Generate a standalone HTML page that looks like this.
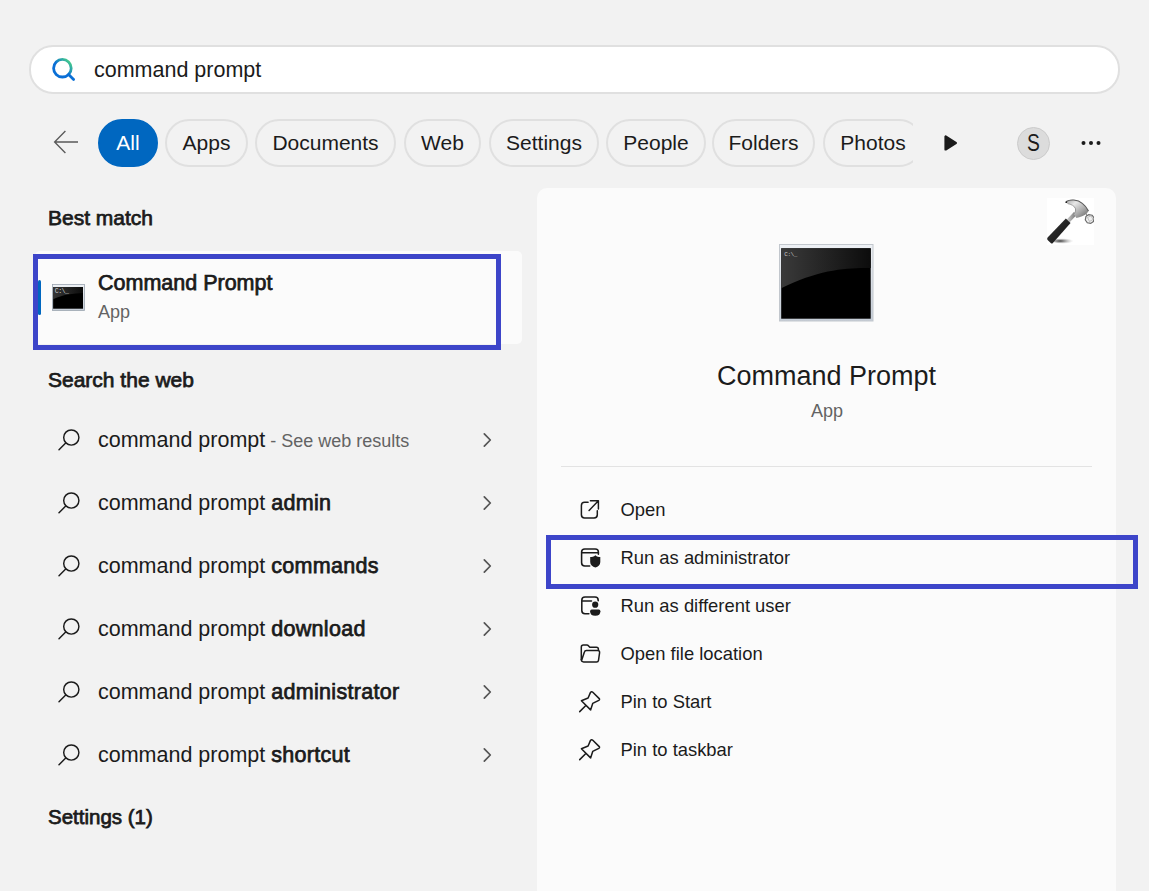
<!DOCTYPE html>
<html><head><meta charset="utf-8">
<style>
*{box-sizing:border-box;margin:0;padding:0}
html,body{width:1149px;height:891px;overflow:hidden;background:#f2f2f2;font-family:"Liberation Sans",sans-serif;color:#1b1b1b}
.a{position:absolute;white-space:nowrap;line-height:1}
.search{position:absolute;left:29px;top:45px;width:1091px;height:49px;border:2px solid #e0e0e0;border-radius:24px;background:#fff}
.chip{position:absolute;top:119px;height:48px;border:2px solid #e0e0e0;border-radius:24px;font-size:21px;line-height:44px;text-align:center;color:#1b1b1b}
.chip.on{background:#0067c0;border-color:#0067c0;color:#fff}
.b{-webkit-text-stroke:0.75px #1b1b1b}
.it .b{letter-spacing:0.3px}
.card{position:absolute;left:35px;top:251px;width:487px;height:93px;background:#fbfbfb;border-radius:5px}
.hl{position:absolute;border:5px solid #3d45c9}
.panel{position:absolute;left:537px;top:188px;width:578.5px;height:760px;background:#fbfbfb;border-radius:10px}
.it{font-size:21.5px}
.gr{color:#636363}
.act{font-size:18.4px}
</style></head>
<body>
<div class="search"></div>
<svg class="a" style="left:46px;top:52px" width="34" height="34" viewBox="0 0 34 34">
<defs><linearGradient id="sg" x1="0" y1="1" x2="1" y2="0"><stop offset="0.45" stop-color="#0a6fd6"/><stop offset="1" stop-color="#52e07a"/></linearGradient></defs>
<circle cx="16.4" cy="16.2" r="8.8" fill="none" stroke="url(#sg)" stroke-width="2.8"/>
<line x1="22.6" y1="22.6" x2="27.6" y2="27.6" stroke="#0a6fd6" stroke-width="2.8" stroke-linecap="round"/>
</svg>
<div class="a" style="left:94px;top:59.8px;font-size:21.5px">command prompt</div>

<!-- chips row -->
<svg class="a" style="left:50px;top:127px" width="32" height="30" viewBox="0 0 32 30">
<path d="M15.4 4 L4.6 15 L15.4 26 M4.6 15 H28" fill="none" stroke="#5a5a5a" stroke-width="1.35"/>
</svg>
<div class="chip on" style="left:98px;width:60px">All</div>
<div style="position:absolute;left:0;top:100px;width:913px;height:80px;overflow:hidden">
<div class="chip" style="left:165px;top:19px;width:83px">Apps</div>
<div class="chip" style="left:255px;top:19px;width:141px">Documents</div>
<div class="chip" style="left:404px;top:19px;width:77px">Web</div>
<div class="chip" style="left:489px;top:19px;width:110px">Settings</div>
<div class="chip" style="left:606px;top:19px;width:100px">People</div>
<div class="chip" style="left:712px;top:19px;width:103px">Folders</div>
<div class="chip" style="left:823px;top:19px;width:100px">Photos</div>
</div>
<svg class="a" style="left:942px;top:133px" width="18" height="20" viewBox="0 0 18 20">
<path d="M3.6 3.6 V16.4 L13.8 10 Z" fill="#1b1b1b" stroke="#1b1b1b" stroke-width="2.4" stroke-linejoin="round"/>
</svg>
<div class="a" style="left:1017px;top:127px;width:33px;height:33px;border-radius:50%;background:#dcdcdc;border:1px solid #cbcbcb"></div>
<div class="a" style="left:1017px;top:132.3px;width:33px;font-size:23.5px;text-align:center;transform:scaleX(0.82)">S</div>
<svg class="a" style="left:1078px;top:138px" width="26" height="10" viewBox="0 0 26 10">
<circle cx="5.5" cy="5" r="2" fill="#1b1b1b"/><circle cx="13" cy="5" r="2" fill="#1b1b1b"/><circle cx="20.5" cy="5" r="2" fill="#1b1b1b"/>
</svg>

<!-- left column -->
<div class="a b" style="left:48px;top:206.9px;font-size:21px">Best match</div>
<div class="card"></div>
<div class="a" style="left:38px;top:280px;width:3px;height:35px;background:#0067c0;border-radius:2px"></div>
<svg class="a" style="left:52px;top:284px" width="33" height="27" viewBox="0 0 33 27">
<rect x="0.4" y="0.4" width="32" height="26" fill="url(#bf)" stroke="#9aa4b0" stroke-width="0.8"/>
<rect x="1.1" y="3" width="29.9" height="21.7" fill="#000"/>
<path d="M1.1 3 H31 V8.9 C22 9.2 10 10.5 1.1 15.3 Z" fill="url(#bg1)" opacity="0.95"/>
<text x="2.7" y="9.4" font-family="Liberation Mono" font-size="6.6" fill="#d0d0d0" letter-spacing="-0.5">C:\_</text>
</svg>
<div class="a b" style="left:98px;top:272.6px;font-size:21.5px">Command Prompt</div>
<div class="a gr" style="left:98px;top:303px;font-size:18px">App</div>
<div class="hl" style="left:33px;top:254px;width:468px;height:96px"></div>

<div class="a b" style="left:48px;top:369px;font-size:21px">Search the web</div>

<div class="a it" style="left:98px;top:430.0px">command prompt<span class="gr" style="font-size:18px"> - See web results</span></div>
<div class="a it" style="left:98px;top:493.0px">command prompt <span class="b">admin</span></div>
<div class="a it" style="left:98px;top:556.0px">command prompt <span class="b">commands</span></div>
<div class="a it" style="left:98px;top:619.0px">command prompt <span class="b">download</span></div>
<div class="a it" style="left:98px;top:682.0px">command prompt <span class="b">administrator</span></div>
<div class="a it" style="left:98px;top:745.0px">command prompt <span class="b">shortcut</span></div>

<svg class="a" style="left:52px;top:422.0px" width="36" height="32" viewBox="0 0 36 32"><circle cx="19.3" cy="15.5" r="7.6" fill="none" stroke="#1b1b1b" stroke-width="1.45"/><line x1="13.7" y1="21.1" x2="7" y2="27.8" stroke="#1b1b1b" stroke-width="1.45" stroke-linecap="round"/></svg>
<svg class="a" style="left:478px;top:428.0px" width="18" height="24" viewBox="0 0 18 24"><path d="M6.3 5.8 L12.3 12 L6.3 18.2" fill="none" stroke="#555" stroke-width="1.7" stroke-linecap="round" stroke-linejoin="round"/></svg>
<svg class="a" style="left:52px;top:485.0px" width="36" height="32" viewBox="0 0 36 32"><circle cx="19.3" cy="15.5" r="7.6" fill="none" stroke="#1b1b1b" stroke-width="1.45"/><line x1="13.7" y1="21.1" x2="7" y2="27.8" stroke="#1b1b1b" stroke-width="1.45" stroke-linecap="round"/></svg>
<svg class="a" style="left:478px;top:491.0px" width="18" height="24" viewBox="0 0 18 24"><path d="M6.3 5.8 L12.3 12 L6.3 18.2" fill="none" stroke="#555" stroke-width="1.7" stroke-linecap="round" stroke-linejoin="round"/></svg>
<svg class="a" style="left:52px;top:548.0px" width="36" height="32" viewBox="0 0 36 32"><circle cx="19.3" cy="15.5" r="7.6" fill="none" stroke="#1b1b1b" stroke-width="1.45"/><line x1="13.7" y1="21.1" x2="7" y2="27.8" stroke="#1b1b1b" stroke-width="1.45" stroke-linecap="round"/></svg>
<svg class="a" style="left:478px;top:554.0px" width="18" height="24" viewBox="0 0 18 24"><path d="M6.3 5.8 L12.3 12 L6.3 18.2" fill="none" stroke="#555" stroke-width="1.7" stroke-linecap="round" stroke-linejoin="round"/></svg>
<svg class="a" style="left:52px;top:611.0px" width="36" height="32" viewBox="0 0 36 32"><circle cx="19.3" cy="15.5" r="7.6" fill="none" stroke="#1b1b1b" stroke-width="1.45"/><line x1="13.7" y1="21.1" x2="7" y2="27.8" stroke="#1b1b1b" stroke-width="1.45" stroke-linecap="round"/></svg>
<svg class="a" style="left:478px;top:617.0px" width="18" height="24" viewBox="0 0 18 24"><path d="M6.3 5.8 L12.3 12 L6.3 18.2" fill="none" stroke="#555" stroke-width="1.7" stroke-linecap="round" stroke-linejoin="round"/></svg>
<svg class="a" style="left:52px;top:674.0px" width="36" height="32" viewBox="0 0 36 32"><circle cx="19.3" cy="15.5" r="7.6" fill="none" stroke="#1b1b1b" stroke-width="1.45"/><line x1="13.7" y1="21.1" x2="7" y2="27.8" stroke="#1b1b1b" stroke-width="1.45" stroke-linecap="round"/></svg>
<svg class="a" style="left:478px;top:680.0px" width="18" height="24" viewBox="0 0 18 24"><path d="M6.3 5.8 L12.3 12 L6.3 18.2" fill="none" stroke="#555" stroke-width="1.7" stroke-linecap="round" stroke-linejoin="round"/></svg>
<svg class="a" style="left:52px;top:737.0px" width="36" height="32" viewBox="0 0 36 32"><circle cx="19.3" cy="15.5" r="7.6" fill="none" stroke="#1b1b1b" stroke-width="1.45"/><line x1="13.7" y1="21.1" x2="7" y2="27.8" stroke="#1b1b1b" stroke-width="1.45" stroke-linecap="round"/></svg>
<svg class="a" style="left:478px;top:743.0px" width="18" height="24" viewBox="0 0 18 24"><path d="M6.3 5.8 L12.3 12 L6.3 18.2" fill="none" stroke="#555" stroke-width="1.7" stroke-linecap="round" stroke-linejoin="round"/></svg>
<div class="a b" style="left:48px;top:806.7px;font-size:20.5px">Settings (1)</div>

<!-- right panel -->
<div class="panel"></div>
<svg class="a" style="left:1047px;top:198px" width="47" height="47" viewBox="0 0 47 47">
<defs>
<linearGradient id="hh" x1="0" y1="0" x2="1" y2="1"><stop offset="0" stop-color="#a0a0a0"/><stop offset="0.3" stop-color="#e8e8e8"/><stop offset="0.65" stop-color="#a8a8a8"/><stop offset="1" stop-color="#606060"/></linearGradient>
<linearGradient id="hn" x1="0" y1="0" x2="1" y2="0"><stop offset="0" stop-color="#d0d0d0"/><stop offset="1" stop-color="#707070"/></linearGradient>
<linearGradient id="hd" x1="0" y1="0" x2="1" y2="1"><stop offset="0" stop-color="#3a3a3a"/><stop offset="1" stop-color="#101010"/></linearGradient>
<radialGradient id="hs" cx="0.35" cy="0.5" r="0.6"><stop offset="0" stop-color="#222" stop-opacity="0.9"/><stop offset="1" stop-color="#aaa" stop-opacity="0"/></radialGradient>
</defs>
<rect width="47" height="47" fill="#fff"/>
<ellipse cx="16.5" cy="43" rx="11" ry="2.6" fill="url(#hs)"/>
<path d="M19.8 21.6 L26.9 14 L29.8 16.7 L22.7 24.2 Z" fill="url(#hn)"/>
<path d="M18.85 20.62 L23.55 24.98 L5.88 45.06 Q5 46 4 45.2 L0.6 42 Q-0.2 40.5 0.6 39.6 Z" fill="url(#hd)"/>
<path d="M19 3.4 C22.5 1.2 29 0.6 35.3 5.4 C38 7.4 40 10 41.5 12.9 L39.8 15.5 C37.5 17.5 33 19.5 29.4 20 L26.8 16.1 C28.8 13.2 29 9.6 25.5 7 C23.8 5.9 21.5 5.7 20.3 5.4 C18.9 5 18.4 3.8 19 3.4 Z" fill="url(#hh)"/>
<path d="M19.3 3.5 C23 1.2 30.5 1.2 35.3 5.4 C38 7.4 40 10 41.5 12.9" fill="none" stroke="#5a5a5a" stroke-width="1.1"/>
<path d="M20.6 5.6 C24 6.2 27.5 7.8 28.4 10.5 C29 12.5 28.3 14.6 26.9 16.1" fill="none" stroke="#8a8a8a" stroke-width="0.8"/>
<circle cx="19.3" cy="4.2" r="0.9" fill="#222"/>
<path d="M38.6 14.8 L41 17.5 L39.5 19 Z" fill="#888"/>
<path d="M46.50 23.42 L43.67 25.39 L40.28 24.80 L38.31 21.97 L38.90 18.58 L41.73 16.61 L45.12 17.20 L47.09 20.03 Z" fill="#efefef" stroke="#6a6a6a" stroke-width="1.2"/>
<path d="M40.5 19.5 L44 17.8 L46 21.5 L42.5 23.5 Z" fill="none" stroke="#aaa" stroke-width="0.7"/>
</svg>
<svg class="a" style="left:779px;top:244px" width="95" height="78" viewBox="0 0 95 78">
<defs>
<linearGradient id="bf" x1="0" y1="0" x2="0" y2="1"><stop offset="0" stop-color="#eef1f5"/><stop offset="1" stop-color="#c4ccd6"/></linearGradient>
<linearGradient id="bg1" x1="0" y1="0" x2="1" y2="0"><stop offset="0" stop-color="#3a3a3a"/><stop offset="1" stop-color="#0c0c0c"/></linearGradient>
</defs>
<rect x="0.5" y="0.5" width="93.5" height="76.5" fill="url(#bf)" stroke="#c2c7cd" stroke-width="1"/>
<rect x="2.2" y="4.3" width="89.5" height="70.4" fill="#000"/>
<path d="M2.2 4.3 H91.7 V24 C70 23.5 40 25 2.2 44.3 Z" fill="url(#bg1)"/>
<text x="5.2" y="11.9" font-family="Liberation Mono" font-size="6" fill="#c8c8c8" letter-spacing="-0.4">C:\_</text>
</svg>
<div class="a" style="left:717px;top:363.4px;font-size:27px">Command Prompt</div>
<div class="a gr" style="left:811px;top:402px;font-size:18px">App</div>
<div class="a" style="left:561px;top:466px;width:531px;height:1px;background:#e3e3e3"></div>

<div class="a act" style="left:620.5px;top:500.5px">Open</div>
<div class="a act" style="left:620.5px;top:548.5px">Run as administrator</div>
<div class="a act" style="left:620.5px;top:596.5px">Run as different user</div>
<div class="a act" style="left:620.5px;top:644.5px">Open file location</div>
<div class="a act" style="left:620.5px;top:692.5px">Pin to Start</div>
<div class="a act" style="left:620.5px;top:740.5px">Pin to taskbar</div>

<svg class="a" style="left:574px;top:494px" width="36" height="34" viewBox="0 0 36 34" fill="none" stroke="#1b1b1b" stroke-width="1.5" stroke-linecap="round" stroke-linejoin="round">
<path d="M14.1 8.2 H10.6 Q7.4 8.2 7.4 11.4 V20.7 Q7.4 23.9 10.6 23.9 H20.1 Q23.3 23.9 23.3 20.7 V16.8"/>
<path d="M15.1 16.4 L24.4 6.7 M16.4 6.7 H24.4 V14.9"/>
</svg>
<svg class="a" style="left:574px;top:542px" width="36" height="34" viewBox="0 0 36 34">
<path d="M15.7 23.9 H10.8 Q7.6 23.9 7.6 20.7 V10.1 Q7.6 6.9 10.8 6.9 H21.2 Q24.4 6.9 24.4 10.1 V12.2 M7.6 10.7 H24.4" fill="none" stroke="#1b1b1b" stroke-width="1.55" stroke-linecap="round"/>
<path d="M21.4 13.2 C19.8 14.6 18 15.1 16.2 15.1 V20 C16.2 23 18.5 24.8 21.4 25.6 C24.3 24.8 26.3 23 26.3 20 V15.1 C24.6 15.1 23 14.6 21.4 13.2 Z" fill="#1b1b1b"/>
</svg>
<svg class="a" style="left:574px;top:590px" width="36" height="34" viewBox="0 0 36 34">
<path d="M14.9 23.8 H11 Q7.8 23.8 7.8 20.6 V10.2 Q7.8 7 11 7 H21 Q24.2 7 24.2 10.2 V10.7 M7.8 11 H17.5" fill="none" stroke="#1b1b1b" stroke-width="1.55" stroke-linecap="round"/>
<circle cx="21.2" cy="14.7" r="3.1" fill="#1b1b1b"/>
<path d="M16.1 21.2 Q16.1 19.6 17.7 19.6 H24.8 Q26.4 19.6 26.4 21.2 Q26.4 25.8 21.25 25.8 Q16.1 25.8 16.1 21.2 Z" fill="#1b1b1b"/>
</svg>
<svg class="a" style="left:574px;top:638px" width="36" height="34" viewBox="0 0 36 34" fill="none" stroke="#1b1b1b" stroke-width="1.5" stroke-linejoin="round" stroke-linecap="round">
<path d="M7.3 21.5 V9.2 Q7.3 7.1 9.4 7.1 H12.9 Q13.9 7.1 14.6 7.9 L15.8 9.3 H22.4 Q24.4 9.3 24.4 11.3 V12.3"/>
<path d="M7.3 21.5 Q7.2 23.9 9.6 23.9 H22.6 Q24.2 23.9 24.5 22.3 L25.6 14.6 Q25.8 12.4 23.6 12.4 H12.4 Q10.8 12.4 10.4 14 L7.5 22.8"/>
</svg>
<svg class="a" style="left:574px;top:686px" width="36" height="34" viewBox="0 0 36 34" fill="none" stroke="#1b1b1b" stroke-width="1.5" stroke-linejoin="round" stroke-linecap="round">
<path d="M16.5 6.4 Q17.6 5 18.8 6.2 L25 12.4 Q26.2 13.6 24.8 14.4 L18.7 17.4 L16.6 23.9 L7.4 14.7 L14.1 12 Z"/>
<path d="M11.6 19.7 L5.7 25.6"/>
</svg>
<svg class="a" style="left:574px;top:734px" width="36" height="34" viewBox="0 0 36 34" fill="none" stroke="#1b1b1b" stroke-width="1.5" stroke-linejoin="round" stroke-linecap="round">
<path d="M16.5 6.4 Q17.6 5 18.8 6.2 L25 12.4 Q26.2 13.6 24.8 14.4 L18.7 17.4 L16.6 23.9 L7.4 14.7 L14.1 12 Z"/>
<path d="M11.6 19.7 L5.7 25.6"/>
</svg>
<div class="hl" style="left:546px;top:535px;width:592px;height:54px"></div>
</body></html>
